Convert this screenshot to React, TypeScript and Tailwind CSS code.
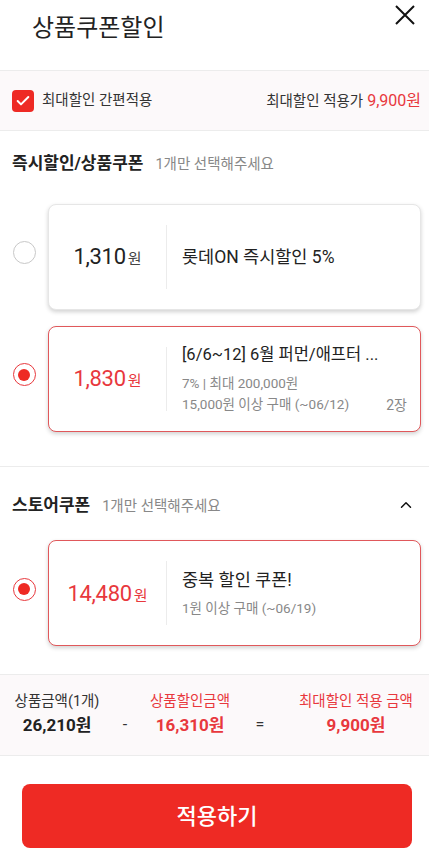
import { ChevronUp, Check } from 'lucide-react'

const RED = 'text-[#e8383d]'

function Radio({ checked }: { checked?: boolean }) {
  if (checked) {
    return (
      <div className="w-[23px] h-[23px] rounded-full border-[1.5px] border-[#e8383d] flex items-center justify-center">
        <div className="w-[12px] h-[12px] rounded-full bg-[#ee2a24]" />
      </div>
    )
  }
  return <div className="w-[23px] h-[23px] rounded-full border border-[#c8c8c8]" />
}

type Coupon = {
  price: string
  title: string
  titleSize?: string
  lines?: string[]
  count?: string
  checked?: boolean
}

function CouponRow({ coupon }: { coupon: Coupon }) {
  const { price, title, titleSize = 'text-[17.5px]', lines, count, checked } = coupon
  return (
    <div className="flex items-center pr-2">
      <div className="w-[48px] flex justify-center shrink-0 pb-[8px]">
        <Radio checked={checked} />
      </div>
      <div
        className={`flex-1 min-w-0 h-[106px] rounded-lg bg-white flex items-center relative shadow-[0_2px_4px_rgba(0,0,0,0.18)] border ${
          checked ? 'border-[#e0585b]' : 'border-[#e6e6e6]'
        }`}
      >
        <div className="w-[117px] shrink-0 flex items-baseline justify-center">
          <span className={`text-[22px] tracking-[-0.3px] ${checked ? RED : 'text-[#222]'}`}>{price}</span>
          <span className={`text-[15px] ml-[2px] ${checked ? RED : 'text-[#444]'}`}>원</span>
        </div>
        <div className="w-px self-stretch my-5 bg-[#ececec]" />
        <div className="flex-1 pl-[15px] pr-[13px] min-w-0">
          <div className={`${titleSize} text-[#222] whitespace-nowrap overflow-hidden leading-[24px]`}>{title}</div>
          {lines && (
            <div className="mt-[6px]">
              {lines.map((l) => (
                <div key={l} className="text-[13.5px] text-[#888] leading-[21px]">
                  {l}
                </div>
              ))}
            </div>
          )}
        </div>
        {count && (
          <span className="absolute right-[13px] bottom-[15px] text-[14px] text-[#888]">{count}</span>
        )}
      </div>
    </div>
  )
}

function SectionTitle({ title, chevron }: { title: string; chevron?: boolean }) {
  return (
    <div className="flex items-center justify-between pl-3 pr-[14px]">
      <div className="flex items-baseline gap-3">
        <span className="text-[17px] font-bold text-[#222]">{title}</span>
        <span className="text-[14.5px] text-[#888]">1개만 선택해주세요</span>
      </div>
      {chevron && <ChevronUp size={18} strokeWidth={2} className="text-[#111]" />}
    </div>
  )
}

export default function App() {
  return (
    <div className="w-[429px] min-h-[856px] bg-white font-['Roboto','Noto_Sans_CJK_KR',sans-serif]">
      {/* Header */}
      <div className="h-[70px] flex items-start justify-between pl-8 pr-[14px]">
        <h1 className="text-[24px] text-[#222] mt-[10px]">상품쿠폰할인</h1>
        <svg width="20" height="20" viewBox="0 0 20 20" className="mt-[5px]">
          <path d="M1 1L19 19M19 1L1 19" stroke="#111" strokeWidth="2" />
        </svg>
      </div>

      {/* Quick apply bar */}
      <div className="h-[61px] bg-[#fcf9fa] border-y border-[#ececec] flex items-center justify-between pl-3 pr-2">
        <div className="flex items-center gap-2">
          <div className="w-[22px] h-[22px] rounded-[4px] bg-[#ee2a24] flex items-center justify-center">
            <Check size={16} strokeWidth={3} className="text-white" />
          </div>
          <span className="text-[14.5px] text-[#333]">최대할인 간편적용</span>
        </div>
        <div className="flex items-baseline gap-1">
          <span className="text-[14.5px] text-[#333]">최대할인 적용가</span>
          <span className={`text-[16px] ${RED}`}>9,900원</span>
        </div>
      </div>

      {/* Instant discount / product coupon */}
      <div className="pt-[20px]">
        <SectionTitle title="즉시할인/상품쿠폰" />
        <div className="mt-[27px] flex flex-col gap-4">
          <CouponRow coupon={{ price: '1,310', title: '롯데ON 즉시할인 5%' }} />
          <CouponRow
            coupon={{
              price: '1,830',
              title: '[6/6~12] 6월 퍼먼/애프터 ...',
              titleSize: 'text-[16.5px]',
              lines: ['7% | 최대 200,000원', '15,000원 이상 구매 (~06/12)'],
              count: '2장',
              checked: true,
            }}
          />
        </div>
      </div>

      <div className="mt-[34px] border-t border-[#ececec]" />

      {/* Store coupon */}
      <div className="pt-[26px]">
        <SectionTitle title="스토어쿠폰" chevron />
        <div className="mt-[22px]">
          <CouponRow
            coupon={{
              price: '14,480',
              title: '중복 할인 쿠폰!',
              lines: ['1원 이상 구매 (~06/19)'],
              checked: true,
            }}
          />
        </div>
      </div>

      {/* Summary */}
      <div className="mt-[28px] h-[82px] bg-[#fcf9fa] border-y border-[#ececec] flex items-center pl-[7px]">
        <div className="w-[100px] text-center">
          <div className="text-[14.5px] text-[#333]">상품금액(1개)</div>
          <div className="text-[17px] font-bold text-[#222]">26,210원</div>
        </div>
        <div className="w-[36px] text-center text-[16px] text-[#333] pt-5">-</div>
        <div className="w-[94px] text-center">
          <div className={`text-[14.5px] ${RED}`}>상품할인금액</div>
          <div className={`text-[17px] font-bold ${RED}`}>16,310원</div>
        </div>
        <div className="w-[46px] text-center text-[16px] text-[#333] pt-5">=</div>
        <div className="w-[146px] text-center">
          <div className={`text-[14.5px] ${RED}`}>최대할인 적용 금액</div>
          <div className={`text-[17px] font-bold ${RED}`}>9,900원</div>
        </div>
      </div>

      {/* Apply button */}
      <div className="pt-[28px] pl-[22px] pr-[17px]">
        <button className="w-full h-[64px] rounded-lg bg-[#ee2a24] text-white text-[22px] font-medium">
          적용하기
        </button>
      </div>
    </div>
  )
}
